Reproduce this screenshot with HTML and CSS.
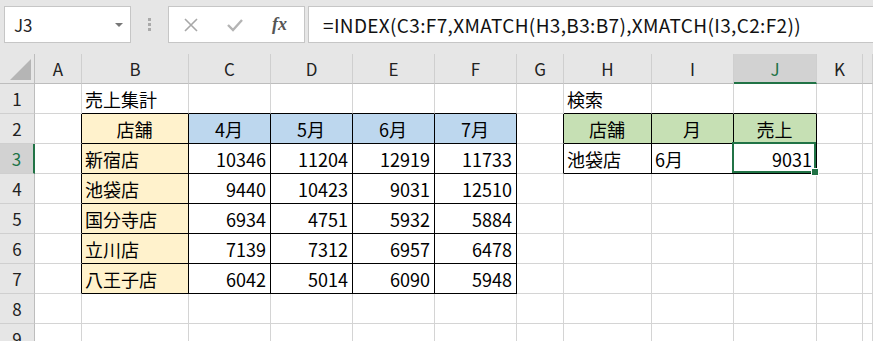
FILE: index.html
```html
<!DOCTYPE html>
<html lang="ja">
<head>
  <meta charset="UTF-8" />
  <title>売上集計 - XMATCH</title>
  <link rel="stylesheet" href="styles.css">
</head>
<body>
  <div class="fbar">
    <div class="namebox"><span>J3</span><span class="caret"></span></div>
    <div class="grip"><i></i><i></i><i></i></div>
    <div class="btns">
      <svg width="16" height="16" viewBox="0 0 16 16"><path d="M2 2 L14 14 M14 2 L2 14" stroke="#a8a8a8" stroke-width="1.6" fill="none"/></svg>
      <svg width="18" height="16" viewBox="0 0 18 16"><path d="M2 8 L7 13 L16 3" stroke="#b4b4b4" stroke-width="2.4" fill="none"/></svg>
      <span class="fx">fx</span>
    </div>
    <div class="formula">=INDEX(C3:F7,XMATCH(H3,B3:B7),XMATCH(I3,C2:F2))</div>
  </div>

  <div class="sheet">
    <div class="row">
      <div class="corner"><span></span></div>
      <div class="ch">A</div><div class="ch">B</div><div class="ch">C</div><div class="ch">D</div>
      <div class="ch">E</div><div class="ch">F</div><div class="ch">G</div><div class="ch">H</div>
      <div class="ch">I</div><div class="ch sel">J</div><div class="ch">K</div><div class="ch"></div>
    </div>
    <div class="row">
      <div class="rh">1</div>
      <div class="c"></div>
      <div class="c edge-b">売上集計</div>
      <div class="c edge-b"></div><div class="c edge-b"></div><div class="c edge-b"></div><div class="c edge-b"></div>
      <div class="c"></div>
      <div class="c edge-b">検索</div>
      <div class="c edge-b"></div><div class="c edge-b"></div>
      <div class="c"></div><div class="c"></div>
    </div>
    <div class="row">
      <div class="rh">2</div>
      <div class="c edge-r"></div>
      <div class="c t shop mid">店舗</div>
      <div class="c t month mid">4月</div><div class="c t month mid">5月</div>
      <div class="c t month mid">6月</div><div class="c t month mid">7月</div>
      <div class="c edge-r"></div>
      <div class="c t key mid">店舗</div><div class="c t key mid">月</div><div class="c t key mid">売上</div>
      <div class="c"></div><div class="c"></div>
    </div>
    <div class="row">
      <div class="rh sel">3</div>
      <div class="c edge-r"></div>
      <div class="c t shop">新宿店</div>
      <div class="c t num">10346</div><div class="c t num">11204</div>
      <div class="c t num">12919</div><div class="c t num">11733</div>
      <div class="c edge-r"></div>
      <div class="c t">池袋店</div><div class="c t">6月</div>
      <div class="c t num cur">9031</div>
      <div class="c"></div><div class="c"></div>
    </div>
    <div class="row">
      <div class="rh">4</div>
      <div class="c edge-r"></div>
      <div class="c t shop">池袋店</div>
      <div class="c t num">9440</div><div class="c t num">10423</div>
      <div class="c t num">9031</div><div class="c t num">12510</div>
      <div class="c"></div><div class="c"></div><div class="c"></div><div class="c"></div>
      <div class="c"></div><div class="c"></div>
    </div>
    <div class="row">
      <div class="rh">5</div>
      <div class="c edge-r"></div>
      <div class="c t shop">国分寺店</div>
      <div class="c t num">6934</div><div class="c t num">4751</div>
      <div class="c t num">5932</div><div class="c t num">5884</div>
      <div class="c"></div><div class="c"></div><div class="c"></div><div class="c"></div>
      <div class="c"></div><div class="c"></div>
    </div>
    <div class="row">
      <div class="rh">6</div>
      <div class="c edge-r"></div>
      <div class="c t shop">立川店</div>
      <div class="c t num">7139</div><div class="c t num">7312</div>
      <div class="c t num">6957</div><div class="c t num">6478</div>
      <div class="c"></div><div class="c"></div><div class="c"></div><div class="c"></div>
      <div class="c"></div><div class="c"></div>
    </div>
    <div class="row">
      <div class="rh">7</div>
      <div class="c edge-r"></div>
      <div class="c t shop">八王子店</div>
      <div class="c t num">6042</div><div class="c t num">5014</div>
      <div class="c t num">6090</div><div class="c t num">5948</div>
      <div class="c"></div><div class="c"></div><div class="c"></div><div class="c"></div>
      <div class="c"></div><div class="c"></div>
    </div>
    <div class="row">
      <div class="rh">8</div>
      <div class="c"></div><div class="c"></div><div class="c"></div><div class="c"></div>
      <div class="c"></div><div class="c"></div><div class="c"></div><div class="c"></div>
      <div class="c"></div><div class="c"></div><div class="c"></div><div class="c"></div>
    </div>
    <div class="row">
      <div class="rh">9</div>
      <div class="c"></div><div class="c"></div><div class="c"></div><div class="c"></div>
      <div class="c"></div><div class="c"></div><div class="c"></div><div class="c"></div>
      <div class="c"></div><div class="c"></div><div class="c"></div><div class="c"></div>
    </div>
  </div>
</body>
</html>
```

FILE: styles.css
```css
* { box-sizing: border-box; }
body { margin: 0; overflow: hidden; background: #fff; font-family: "Noto Sans CJK JP", sans-serif; color: #000; }

/* formula bar */
.fbar { height: 54px; background: #e6e6e6; display: flex; align-items: flex-start; padding: 6px 0 0 4px; }
.namebox { width: 127px; height: 37px; background: #fff; border: 1px solid #c6c6c6; display: flex; align-items: center; justify-content: space-between; padding: 0 7px 0 9px; font-size: 17px; color: #222; }
.caret { width: 0; height: 0; border-left: 4px solid transparent; border-right: 4px solid transparent; border-top: 4px solid #777; }
.grip { width: 37px; height: 37px; display: flex; flex-direction: column; align-items: center; justify-content: center; gap: 2px; }
.grip i { width: 3px; height: 3px; background: #aaa; display: block; }
.btns { width: 137px; height: 37px; background: #fff; border: 1px solid #c6c6c6; display: flex; align-items: center; padding-left: 14px; gap: 27px; }
.fx { font-family: "Liberation Serif", serif; font-style: italic; font-weight: bold; font-size: 18px; color: #555; margin-left: 1px; }
.formula { flex: 1; height: 37px; margin-left: 3px; background: #fff; border: 1px solid #c6c6c6; border-right: none; display: flex; align-items: center; padding-left: 14px; font-size: 19px; letter-spacing: 0.35px; color: #111; }

/* sheet grid */
.row { display: grid; grid-template-columns: 35px 47px 107px 82px 82px 82px 82px 47px 88px 82px 83px 46px 1fr; height: 30px; }
.row > div { display: flex; align-items: center; white-space: nowrap; font-size: 18px; }
.corner, .ch, .rh { background: #e6e6e6; color: #222; font-size: 17px !important; }
.corner { border-right: 1px solid #bdbdbd; border-bottom: 1px solid #bdbdbd; position: relative; }
.corner span { position: absolute; right: 3px; bottom: 3px; width: 21px; height: 21px; background: #b5b5b5; clip-path: polygon(100% 0, 100% 100%, 0 100%); }
.ch { justify-content: center; border-right: 1px solid #cfcfcf; border-bottom: 1px solid #bdbdbd; }
.rh { justify-content: center; border-right: 1px solid #bdbdbd; border-bottom: 1px solid #cfcfcf; }
.ch.sel { background: #d2d2d2; color: #217346; border-bottom: 2px solid #217346; }
.rh.sel { background: #d2d2d2; color: #217346; border-right: 2px solid #217346; }

.c { border-right: 1px solid #d4d4d4; border-bottom: 1px solid #d4d4d4; padding: 0 4px 0 3px; }
.c.t { border-color: #000; }
.c.edge-r { border-right-color: #000; }
.c.edge-b { border-bottom-color: #000; }
.mid { justify-content: center; }
.num { justify-content: flex-end; }
.shop { background: #fff2cc; }
.month { background: #bdd7ee; }
.key { background: #c6e0b4; }

/* active cell */
.cur { position: relative; }
.cur::before { content: ""; position: absolute; top: -2px; left: -2px; right: 0; bottom: 0; border: 2px solid #217346; }
.cur::after { content: ""; position: absolute; right: -3px; bottom: -3px; width: 6px; height: 6px; background: #217346; border: 1px solid #fff; }
```
